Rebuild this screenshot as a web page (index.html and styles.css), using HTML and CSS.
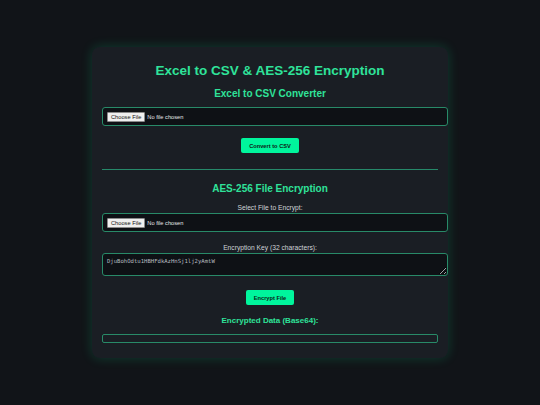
FILE: index.html
```html
<!DOCTYPE html>
<html lang="en">
<head>
    <meta charset="UTF-8">
    <meta name="viewport" content="width=device-width, initial-scale=1.0">
    <title>Excel to CSV &amp; AES-256 Encryption</title>
    <link rel="stylesheet" href="styles.css">
</head>
<body>
    <div class="container">
        <h1>Excel to CSV &amp; AES-256 Encryption</h1>

        <!-- converter -->
        <div class="section">
            <h2>Excel to CSV Converter</h2>
            <input type="file" id="excelFile" accept=".xlsx,.xls">
            <button type="button" class="btn">Convert to CSV</button>
        </div>

        <hr>

        <!-- encryption -->
        <div class="section">
            <h2 class="enc-title">AES-256 File Encryption</h2>
            <label for="encFile">Select File to Encrypt:</label>
            <input type="file" id="encFile">

            <label for="encKey" class="key-label">Encryption Key (32 characters):</label>
            <textarea id="encKey">DjuBohOdtu1HBHFdkAzHnSj1lj2yAmtW</textarea>

            <button type="button" class="btn btn-encrypt">Encrypt File</button>

            <h3>Encrypted Data (Base64):</h3>
            <div id="output" class="output"></div>
        </div>
    </div>
</body>
</html>
```

FILE: styles.css
```css
body {
    font-family: "Liberation Sans", Arial, sans-serif;
    display: flex;
    align-items: center;
    justify-content: center;
    height: 100vh;
    margin: 0;
    background-color: #111418;
    color: #d0d4d8;
}
.container {
    width: 336px;
    padding: 10px;
    background-color: #1a1e24;
    border-radius: 8px;
    box-shadow: 0 0 12px rgba(0, 255, 160, 0.18);
    text-align: center;
}
h1 {
    font-size: 13.5px;
    color: #2fe39a;
    margin: 6px 0 10px;
}
h2 {
    font-size: 10px;
    color: #2fe39a;
    margin: 0 0 8px;
}
.enc-title {
    margin-top: 13px;
    margin-bottom: 10px;
}
h3 {
    font-size: 8px;
    color: #2fe39a;
    margin: 11px 0 9px;
}
label {
    display: block;
    font-size: 6.7px;
    color: #cfd3d7;
    margin-bottom: 2px;
}
.key-label {
    margin-top: 12px;
}
input[type="file"],
textarea {
    display: block;
    width: 100%;
    padding: 4px;
    font-family: inherit;
    font-size: 5.7px;
    color: #e4e6e8;
    background-color: #0e1115;
    border: 1px solid #288a68;
    border-radius: 3px;
    text-align: left;
}
input[type="file"] {
    height: 9px;
}
input[type="file"]::file-selector-button {
    font-family: inherit;
    font-size: 5.7px;
    padding: 1px 3px;
    margin-right: 2px;
    color: #111;
    background-color: #efefef;
    border: 0.5px solid #8a8a8a;
    border-radius: 1px;
}
textarea {
    height: 13px;
    font-family: "DejaVu Sans Mono", monospace;
    font-size: 5.6px;
    color: #b8bcc0;
}
.btn {
    margin: 12px 0 0;
    padding: 4.5px 8px;
    font-family: inherit;
    font-size: 5.7px;
    font-weight: bold;
    color: #0d1a14;
    background-color: #00f59c;
    border: none;
    border-radius: 2px;
    cursor: pointer;
}
.btn-encrypt {
    margin-top: 14px;
}
hr {
    height: 1px;
    border: none;
    background-color: #26896a;
    margin: 16px 0 0;
}
.output {
    padding: 3.5px;
    border: 1px solid #288a68;
    border-radius: 2px;
    margin-bottom: 5px;
}
```
